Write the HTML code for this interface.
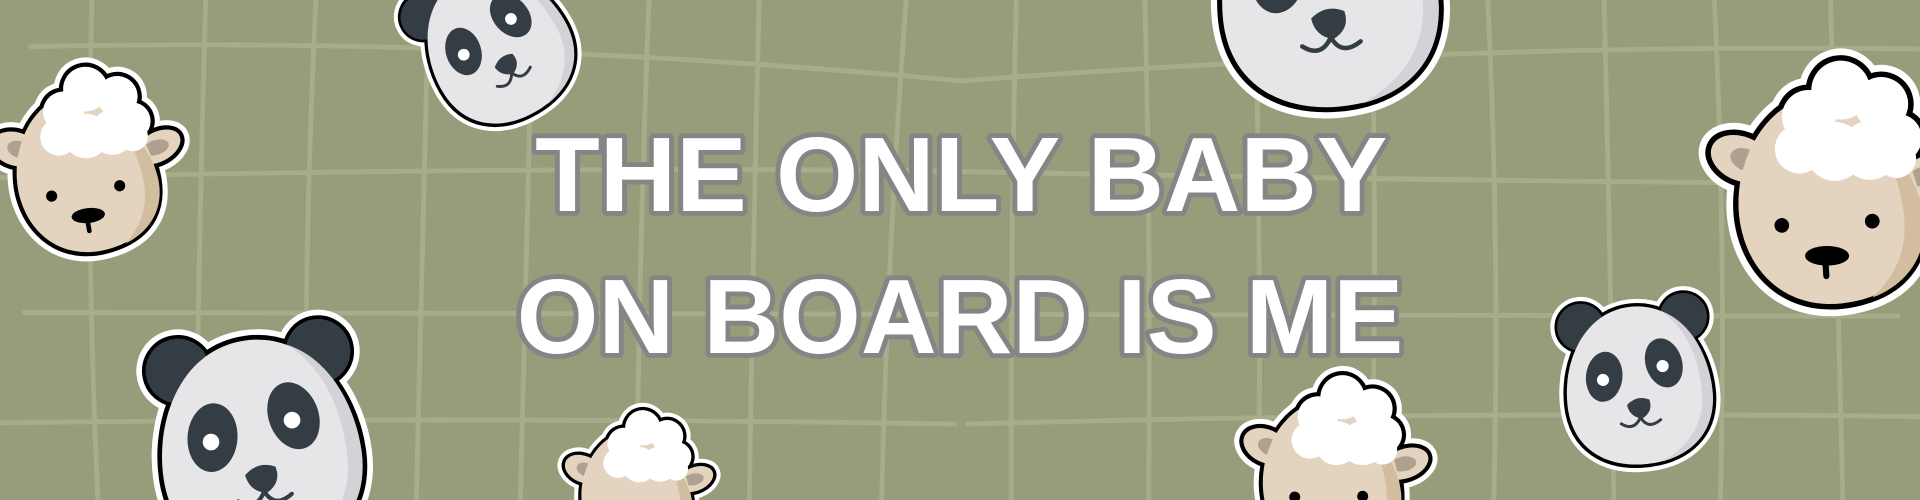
<!DOCTYPE html>
<html><head><meta charset="utf-8"><style>
html,body{margin:0;padding:0;background:#979d7a;overflow:hidden;width:1920px;height:500px;}
svg{display:block;}
</style></head><body>
<svg width="1920" height="500" viewBox="0 0 1568 408" preserveAspectRatio="none" xmlns="http://www.w3.org/2000/svg">
<defs>
<g id="pshape">
  <circle cx="-68" cy="-80" r="32"/>
  <circle cx="68" cy="-80" r="32"/>
  <path d="M0,-102 C62,-102 98,-40 98,20 C98,80 55,110 0,110 C-55,110 -98,80 -98,20 C-98,-40 -62,-102 0,-102Z"/>
</g>
<g id="panda">
  <use href="#pshape" fill="#fff" stroke="#fff" stroke-width="16"/>
  <use href="#pshape" fill="#000" stroke="#000" stroke-width="5"/>
  <circle cx="-68" cy="-80" r="31" fill="#343d43"/>
  <circle cx="68" cy="-80" r="31" fill="#343d43"/>
  <path d="M0,-100 C60,-100 96,-40 96,20 C96,78 54,108 0,108 C-54,108 -96,78 -96,20 C-96,-40 -60,-100 0,-100Z" fill="#e6e6e8"/>
  <path d="M40,-90 C80,-70 96,-20 96,20 C96,70 66,100 20,107 C60,90 82,60 82,20 C82,-30 68,-65 40,-90Z" fill="#d2d2d7"/>
  <ellipse cx="-44" cy="-12" rx="24" ry="33" transform="rotate(12 -44 -12)" fill="#343d43"/>
  <ellipse cx="36" cy="-22" rx="24" ry="33" transform="rotate(-12 36 -22)" fill="#343d43"/>
  <circle cx="-46" cy="-8" r="8" fill="#fff"/>
  <circle cx="34" cy="-18" r="8" fill="#fff"/>
  <path d="M-18,28 Q-4,16 12,24 Q16,40 0,48 Q-16,44 -18,28Z" fill="#343d43"/>
  <path d="M-28,52 Q-12,64 -2,46 Q6,64 24,52" fill="none" stroke="#343d43" stroke-width="4" stroke-linecap="round"/>
</g>
<g id="sshape">
  <ellipse cx="-66" cy="-40" rx="28" ry="20" transform="rotate(35 -66 -40)"/>
  <ellipse cx="80" cy="5" rx="28" ry="18" transform="rotate(-10 80 5)"/>
  <path d="M0,-80 C50,-80 72,-30 72,20 C72,70 45,95 0,95 C-50,95 -80,60 -80,15 C-80,-30 -45,-80 0,-80Z"/>
  <circle cx="-5" cy="-62" r="24"/><circle cx="25" cy="-78" r="26"/><circle cx="55" cy="-60" r="24"/>
  <circle cx="62" cy="-30" r="22"/><circle cx="-18" cy="-38" r="22"/>
</g>
<g id="sheep">
  <use href="#sshape" fill="#fff" stroke="#fff" stroke-width="16"/>
  <use href="#sshape" fill="#000" stroke="#000" stroke-width="5"/>
  <ellipse cx="-66" cy="-40" rx="26" ry="18" transform="rotate(35 -66 -40)" fill="#e4d3be"/>
  <ellipse cx="-62" cy="-38" rx="14" ry="9" transform="rotate(35 -62 -38)" fill="#b0a08f"/>
  <ellipse cx="80" cy="5" rx="26" ry="16" transform="rotate(-10 80 5)" fill="#e4d3be"/>
  <ellipse cx="78" cy="5" rx="14" ry="8" fill="#b0a08f"/>
  <path d="M0,-78 C48,-78 70,-30 70,20 C70,68 44,93 0,93 C-48,93 -78,60 -78,15 C-78,-30 -44,-78 0,-78Z" fill="#e4d3be"/>
  <path d="M40,-50 C62,-20 70,10 70,30 C70,65 48,88 15,93 C45,75 55,50 55,20 C55,-10 50,-30 40,-50Z" fill="#d3bd9f"/>
  <g fill="#fff"><circle cx="-5" cy="-62" r="22"/><circle cx="25" cy="-78" r="24"/><circle cx="55" cy="-60" r="22"/>
  <circle cx="62" cy="-30" r="20"/><circle cx="-18" cy="-38" r="20"/><circle cx="10" cy="-30" r="24"/><circle cx="38" cy="-25" r="24"/><circle cx="58" cy="-14" r="16"/></g>
  <circle cx="-45" cy="20" r="6" fill="#000"/><circle cx="28" cy="32" r="6" fill="#000"/>
  <ellipse cx="-14" cy="52" rx="18" ry="8" transform="rotate(12 -14 52)" fill="#000"/>
  <path d="M-16,54 L-18,68" stroke="#000" stroke-width="5" stroke-linecap="round"/>
</g>
</defs>
<rect width="1568" height="408" fill="#979d7a"/>
<g fill="none" stroke="#a7ac8b" stroke-width="4" stroke-linecap="round">
  <path d="M25,38 Q400,30 785,66 Q1200,35 1568,40"/>
  <path d="M0,145 Q500,135 784,140 Q1200,148 1540,150"/>
  <path d="M20,255 Q700,255 1550,258"/>
  <path d="M0,345 Q400,340 780,346 M790,346 Q1200,335 1568,340"/>
  <path d="M75,0 Q70,200 80,408"/><path d="M168,0 Q162,200 160,408"/><path d="M258,0 Q248,200 250,408"/>
  <path d="M350,0 Q345,200 340,408"/><path d="M435,0 Q430,200 425,408"/><path d="M530,0 Q522,200 520,408"/>
  <path d="M620,0 Q615,200 612,408"/><path d="M740,0 Q725,200 720,408"/><path d="M830,0 Q825,200 826,408"/>
  <path d="M935,0 Q940,200 938,408"/><path d="M1025,0 Q1030,200 1028,408"/><path d="M1120,0 Q1125,200 1120,408"/>
  <path d="M1215,0 Q1225,200 1220,408"/><path d="M1310,0 Q1315,200 1318,408"/><path d="M1400,0 Q1410,200 1405,408"/>
  <path d="M1495,0 Q1500,200 1505,408"/>
</g>
<use href="#panda" transform="translate(212,362) rotate(-8) scale(0.85)"/>
<use href="#panda" transform="translate(405,35) rotate(-30) scale(0.6)"/>
<use href="#panda" transform="translate(1085,-12) rotate(-5) scale(0.92)"/>
<use href="#panda" transform="translate(1338,312) rotate(-6) scale(0.62)"/>
<use href="#sheep" transform="translate(70,135) rotate(-18) scale(0.76)"/>
<use href="#sheep" transform="translate(1495,155) rotate(-12) scale(1.0)"/>
<use href="#sheep" transform="translate(520,398) rotate(-12) scale(0.6)"/>
<use href="#sheep" transform="translate(1088,385) rotate(-10) scale(0.75)"/>
<g font-family="'Liberation Sans', sans-serif" font-weight="bold" font-size="86" fill="#fff" stroke="#858585" stroke-width="8" stroke-linejoin="round" paint-order="stroke">
  <text x="437" y="172" textLength="696" lengthAdjust="spacingAndGlyphs">THE ONLY BABY</text>
  <text x="422" y="288" textLength="724" lengthAdjust="spacingAndGlyphs">ON BOARD IS ME</text>
</g>
</svg>
</body></html>
